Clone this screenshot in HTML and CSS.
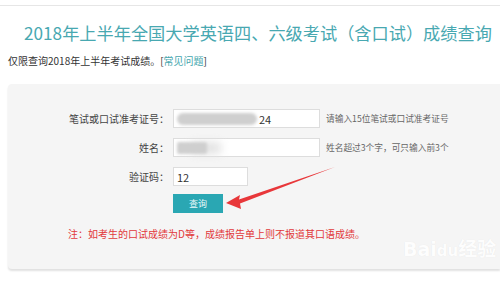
FILE: index.html
```html
<!DOCTYPE html>
<html lang="zh-CN">
<head>
    <meta charset="UTF-8">
    <meta name="viewport" content="width=device-width, initial-scale=1.0">
    <title>2018年上半年全国大学英语四、六级考试（含口试）成绩查询</title>
    <link rel="stylesheet" href="styles.css">
</head>
<body>

  <!-- Top line -->
  <div class="topbar"></div>

  <!-- Heading -->
  <h1 class="title">2018年上半年全国大学英语四、六级考试（含口试）成绩查询</h1>
  <p class="notice">仅限查询2018年上半年考试成绩。[<a href="#">常见问题</a>]</p>

  <!-- Query Form -->
  <div class="panel">
    <form class="query-form">
      <label class="label">笔试或口试准考证号：</label>
      <div class="field wide"><span class="blur blur-long"></span><span class="val">24</span></div>
      <span class="hint">请输入15位笔试或口试准考证号</span>

      <label class="label">姓名：</label>
      <div class="field wide"><span class="blur blur-short"></span></div>
      <span class="hint">姓名超过3个字，可只输入前3个</span>

      <label class="label">验证码：</label>
      <div class="field narrow"><span class="val">12</span></div>
      <span></span>

      <span></span>
      <button type="button" class="btn">查询</button>
      <span></span>
    </form>

    <p class="note">注：如考生的口试成绩为D等，成绩报告单上则不报道其口语成绩。</p>
  </div>

  <!-- Annotation arrow -->
  <svg class="arrow" width="500" height="282" viewBox="0 0 500 282">
    <polygon points="226,203 240,195 239,199.5 335,167 240,203.5 241,209" fill="#e8373a"/>
  </svg>

  <!-- Watermark -->
  <div class="watermark">Bai<span class="paw">du</span>经验</div>

</body>
</html>
```

FILE: styles.css
```css
/* General Page Styling */
body {
  font-family: "Noto Sans CJK SC", "Noto Sans", sans-serif;
  background-color: #ffffff;
  color: #333333;
  margin: 0;
  padding: 0;
  position: relative;
  width: 500px;
  height: 282px;
  overflow: hidden;
}

.topbar {
  height: 5px;
  border-bottom: 1px solid #e6e6e6;
}

/* Heading */
.title {
  margin: 14px 0 0 24px;
  font-size: 17.2px;
  font-weight: normal;
  line-height: 26px;
  color: #48a8b1;
  white-space: nowrap;
}

.notice {
  margin: 8px 0 0 8px;
  font-size: 10px;
  line-height: 14px;
  color: #333333;
}

.notice a {
  color: #45a6ae;
  text-decoration: none;
}

/* Panel */
.panel {
  margin: 16px 0 0 8px;
  height: 185px;
  background-color: #f5f5f5;
  border-radius: 4px 0 0 4px;
  box-shadow: 0 2px 2px rgba(0, 0, 0, 0.12);
  padding: 25px 0 0 60px;
  box-sizing: border-box;
}

.query-form {
  display: grid;
  grid-template-columns: 99px auto 1fr;
  column-gap: 6px;
  row-gap: 10px;
  align-items: center;
}

.label {
  font-size: 10px;
  text-align: right;
  color: #444444;
  white-space: nowrap;
  margin-right: -2px;
}

.field {
  height: 19px;
  box-sizing: border-box;
  background-color: #ffffff;
  border: 1px solid #dddddd;
  display: flex;
  align-items: center;
  padding-left: 3px;
  font-size: 11px;
  color: #333333;
}

.field.wide {
  width: 147px;
}

.field.narrow {
  width: 75px;
}

.blur {
  display: inline-block;
  height: 12px;
  background-color: #cfcfcf;
  border-radius: 6px;
  filter: blur(1.5px);
}

.blur-long {
  width: 80px;
  margin-right: 2px;
}

.blur-short {
  width: 30px;
  border-radius: 2px;
  box-shadow: 14px 0 8px #e2e2e2;
}

.hint {
  font-size: 8.7px;
  color: #666666;
  white-space: nowrap;
}

.btn {
  grid-column: 2;
  margin-top: -2px;
  width: 50px;
  height: 19px;
  border: none;
  padding: 0;
  background-color: #2aa7b3;
  color: #e8f8fa;
  font-family: inherit;
  font-size: 9px;
  cursor: pointer;
}

.note {
  margin: 14px 0 0 0;
  font-size: 10px;
  line-height: 14px;
  color: #e2393b;
  white-space: nowrap;
}

/* Overlay annotation */
.arrow {
  position: absolute;
  top: 0;
  left: 0;
  pointer-events: none;
}

.watermark {
  position: absolute;
  left: 403px;
  top: 234px;
  font-family: "DejaVu Sans", "Noto Sans CJK SC", sans-serif;
  font-size: 19px;
  font-weight: bold;
  color: rgba(255, 255, 255, 0.95);
  text-shadow: 0 0 1px rgba(0, 0, 0, 0.08);
  white-space: nowrap;
}

.watermark .paw {
  font-size: 15px;
}
```
